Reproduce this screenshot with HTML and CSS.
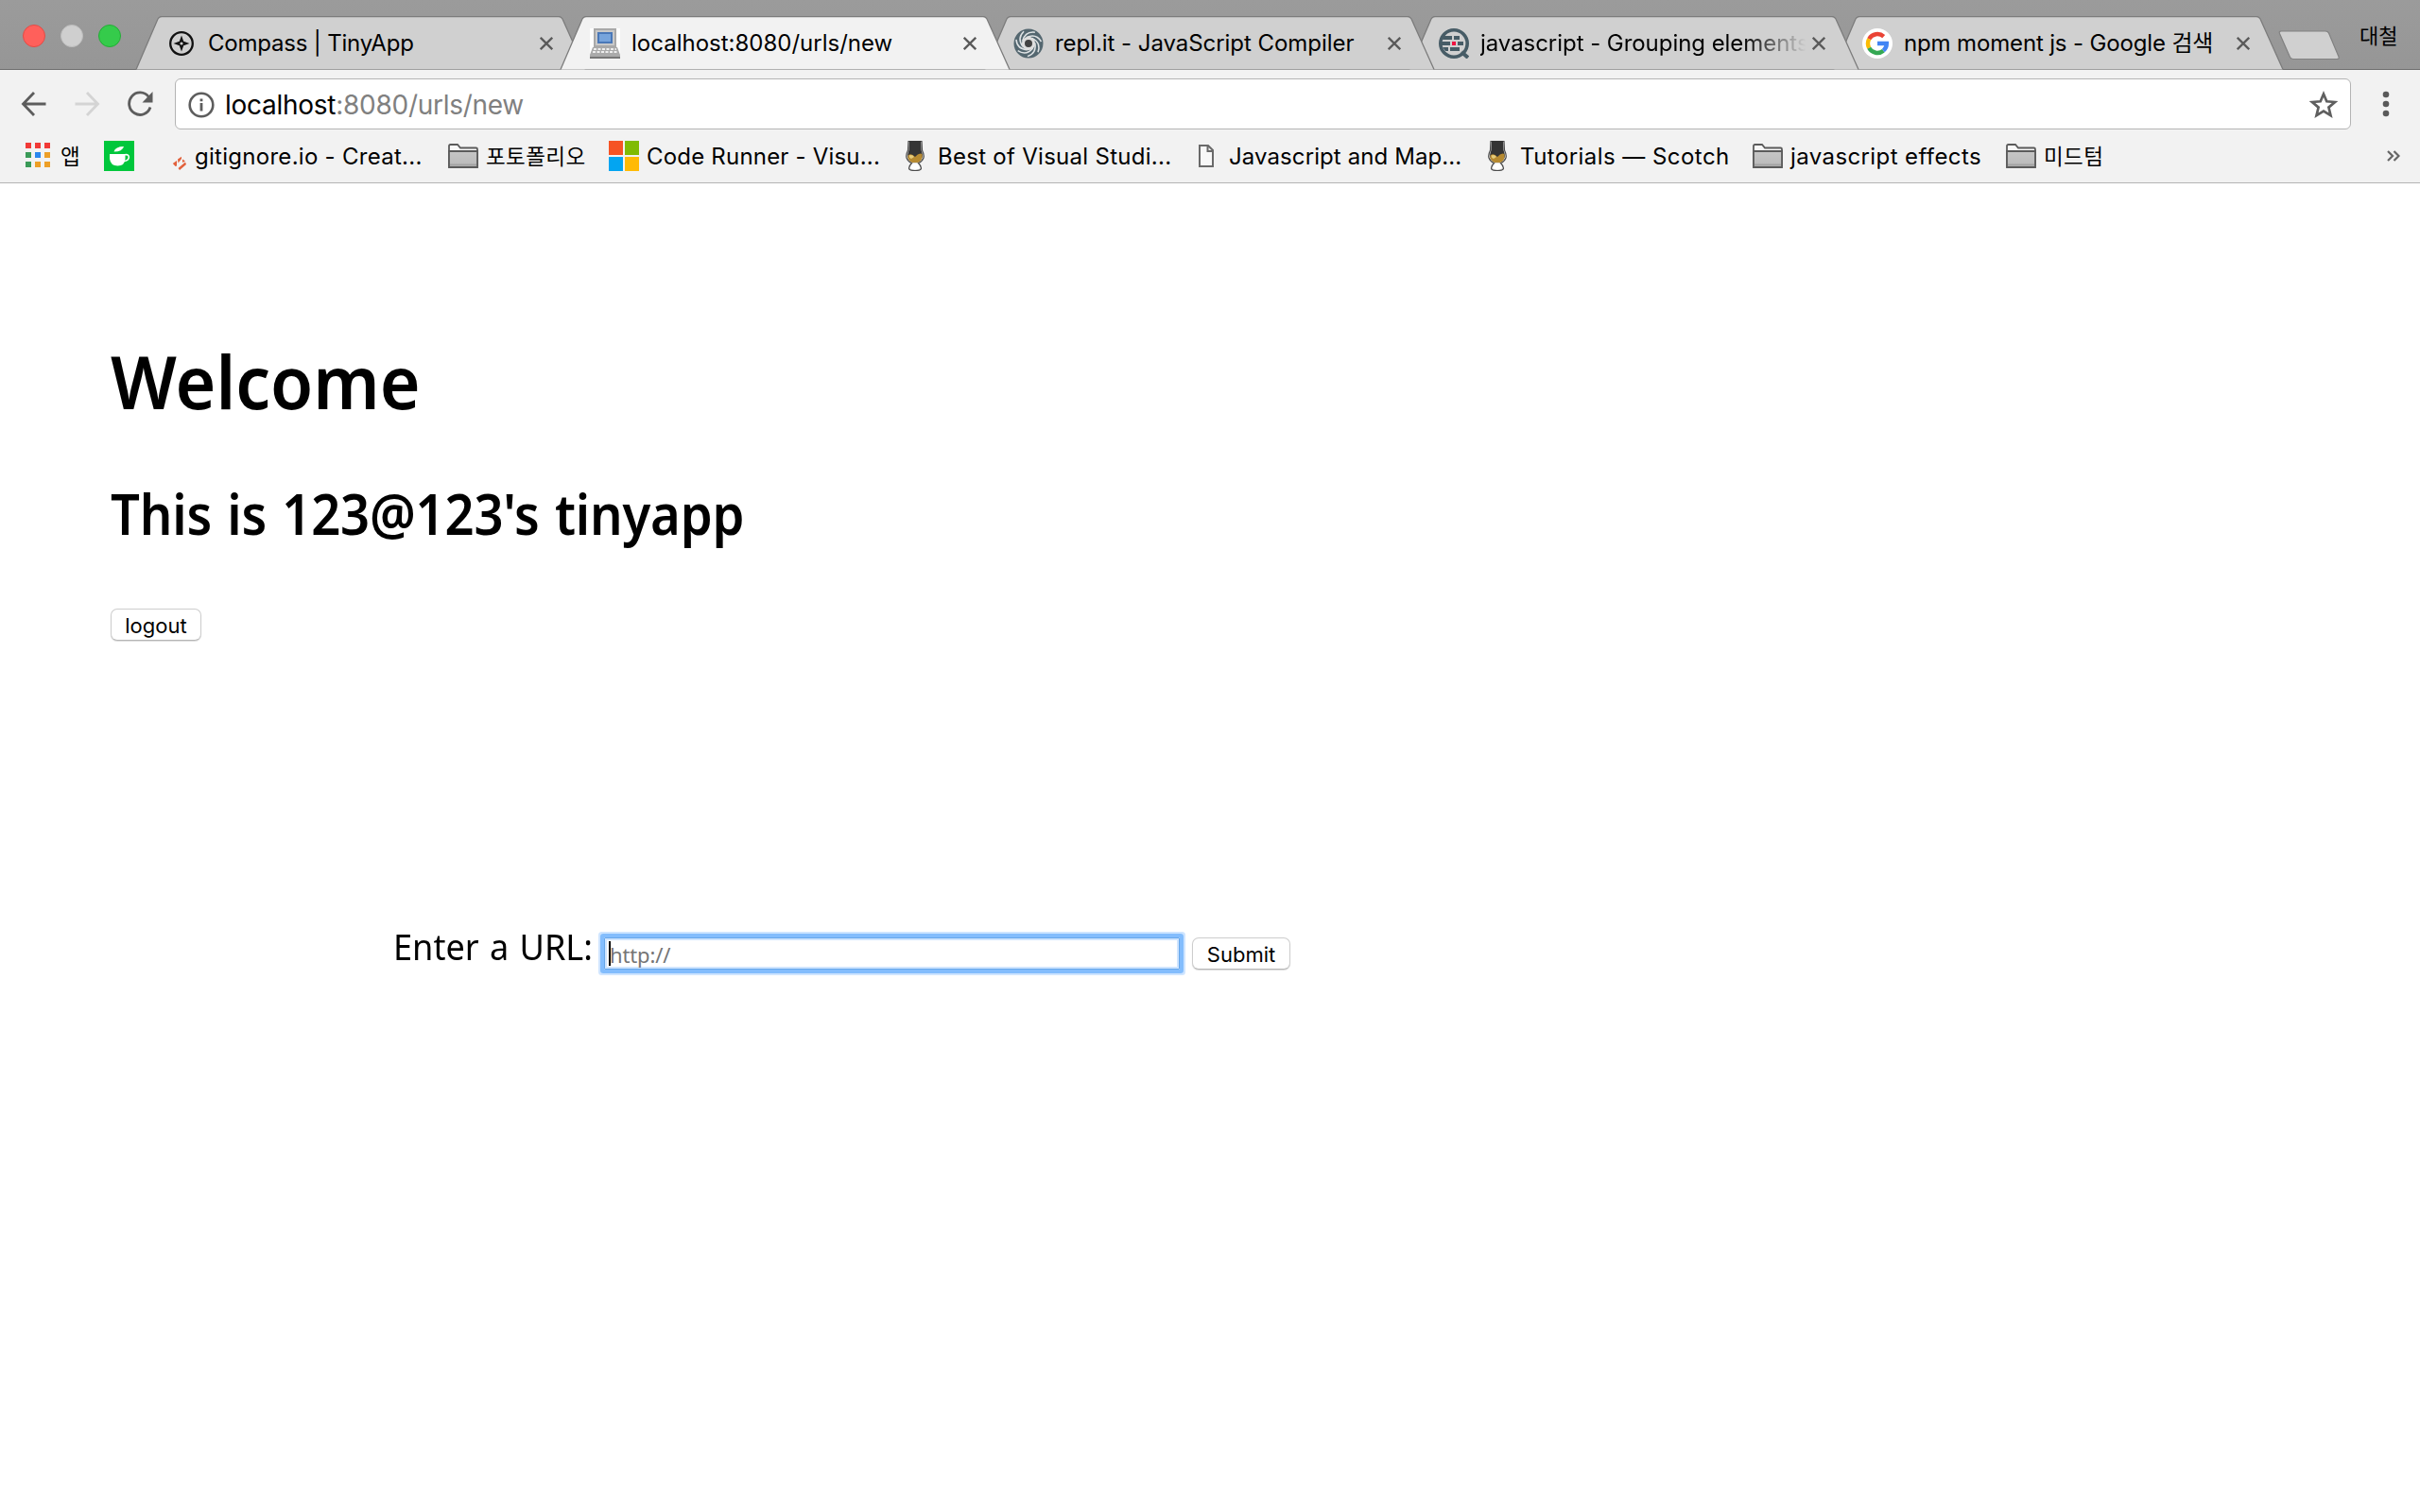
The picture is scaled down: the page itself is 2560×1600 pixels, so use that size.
FILE: index.html
```html
<!DOCTYPE html>
<html lang="ko">
<head>
<meta charset="utf-8">
<title>localhost:8080/urls/new</title>
<link rel="stylesheet" href="styles.css">
</head>
<body>
<svg class="defs" width="0" height="0">
  <defs>
    <linearGradient id="fold" x1="0" y1="0" x2="0" y2="1"><stop offset="0" stop-color="#c6c6c6"/><stop offset="1" stop-color="#b9b9b9"/></linearGradient>
    <symbol id="tabshape" viewBox="0 0 478 57">
      <path d="M1 56.5 L24 3 Q25.500 .5 28 .5 H448 Q450.500 .5 452 3 L476 56.500" stroke-width="1.300"/>
    </symbol>
    <symbol id="close" viewBox="0 0 14 14"><path d="M.8.8 13.200 13.200M13.200.8.8 13.200" stroke="#5a5a5a" stroke-width="2.300" fill="none"/></symbol>
    <symbol id="folder" viewBox="0 0 32 32">
      <path d="M1 27V5.500Q1 4 2.500 4H10l3 3.500H29.500Q31 7.500 31 9V27Q31 28 30 28H2Q1 28 1 27Z" fill="#f8f8f8" stroke="#5b5b5b" stroke-width="1.800"/>
      <path d="M1 11H31V28H1Z" fill="url(#fold)" stroke="#5b5b5b" stroke-width="1.800"/><path d="M2 25.500H30" stroke="#a2a2a2" stroke-width="2"/>
    </symbol>
    <symbol id="glass" viewBox="0 0 32 32">
      <path d="M9 .5H23L23.500 10Q26 15 25 18Q23.500 22 19.500 23.500Q22 26 22.500 29Q22.500 31.500 16 31.500T9.500 29Q10 26 12.500 23.500Q8.500 22 7 18Q6 15 8.500 10Z" fill="#dcdcdc" stroke="#4b4b4b" stroke-width="1.200"/>
      <path d="M10 0H22L22.500 10Q24.500 15 23.500 18H8.500Q7.500 15 9.500 10Z" fill="#343434"/>
      <path d="M8.500 15.500Q12 12.500 16 17Q20 12 23.500 14Q24.500 20.500 19 23H13Q7.500 20.500 8.500 15.500Z" fill="#b68a31"/><path d="M9.500 15.500Q13 14 15 17L12 19Q9.500 18 9.500 15.500Z" fill="#e6cb79"/>
      <path d="M10.500 28.500Q11.500 25.500 13.500 24H18.500Q20.500 25.500 21.500 28.500Q20 30.500 16 30.500T10.500 28.500Z" fill="#fff"/>
    </symbol>
  </defs>
</svg>

<header class="titlebar">
  <div class="lights"><i class="light red"></i><i class="light gray"></i><i class="light green"></i></div>
  <div class="tabs">
    <div class="tab t1"><svg class="shape"><use href="#tabshape"/></svg>
      <svg class="fav" viewBox="0 0 32 32"><circle cx="16" cy="16" r="11.800" fill="none" stroke="#111" stroke-width="2.300"/><path d="M16 7.500 18.200 13.800 24.500 16 18.200 18.200 16 24.500 13.800 18.200 7.500 16 13.800 13.800Z" fill="#111"/><circle cx="16" cy="16" r="1.600" fill="#d0d0d0"/></svg>
      <span class="title">Compass | TinyApp</span><svg class="x"><use href="#close"/></svg></div>
    <div class="tab t2 active"><svg class="shape"><use href="#tabshape"/></svg>
      <svg class="fav" viewBox="0 0 32 32"><path d="M0 0H32V32H0Z" fill="#fff"/><path d="M4 0H28V20H4Z" fill="#a9a9a9"/><path d="M6 2H26V18H6Z" fill="#c9c9c9"/><path d="M8 4H24V16H8Z" fill="#4a78b8"/><path d="M10 6H22V14H10Z" fill="#77a4dc"/><path d="M3 20H29L32 28V32H0V28Z" fill="#aaa"/><path d="M4 22H28M3 25H29" stroke="#eee" stroke-width="1.800" stroke-dasharray="3 1.500"/><path d="M0 31H32" stroke="#777" stroke-width="2"/></svg>
      <span class="title">localhost:8080/urls/new</span><svg class="x"><use href="#close"/></svg></div>
    <div class="tab t3"><svg class="shape"><use href="#tabshape"/></svg>
      <svg class="fav" viewBox="0 0 32 32"><circle cx="16" cy="16" r="15.500" fill="#546770"/><g fill="none" stroke="#dfe3e5" stroke-width="1.500"><path id="arm" d="M14 9.500Q24 5 29.500 14"/><use href="#arm" transform="rotate(51.400 16 16)"/><use href="#arm" transform="rotate(102.900 16 16)"/><use href="#arm" transform="rotate(154.300 16 16)"/><use href="#arm" transform="rotate(205.700 16 16)"/><use href="#arm" transform="rotate(257.100 16 16)"/><use href="#arm" transform="rotate(308.600 16 16)"/></g><circle cx="16" cy="16" r="5.600" fill="#434343" stroke="#dedede" stroke-width="3.200"/></svg>
      <span class="title">repl.it - JavaScript Compiler</span><svg class="x"><use href="#close"/></svg></div>
    <div class="tab t4"><svg class="shape"><use href="#tabshape"/></svg>
      <svg class="fav" viewBox="0 0 32 32"><circle cx="16" cy="16" r="14.200" fill="none" stroke="#475c66" stroke-width="3.600"/><path d="M24 25 31 31" stroke="#475c66" stroke-width="4"/><g fill="#475c66"><path d="M5 8H14V12H4ZM16 8H22V12H16ZM2 14H12V18H2ZM20 14H26V18H20ZM4 20H10V24H7ZM12 20H22V24H12Z"/></g><path d="M14 14H18V18H14Z" fill="#ef1240"/></svg>
      <span class="title faded">javascript - Grouping elements</span><svg class="x"><use href="#close"/></svg></div>
    <div class="tab t5"><svg class="shape"><use href="#tabshape"/></svg>
      <svg class="fav" viewBox="0 0 32 32"><circle cx="16" cy="16" r="16" fill="#fff"/><g fill="none" stroke-width="4.400"><path d="M22.700 8.700A10 10 0 0 0 7.200 11.300" stroke="#ea4335"/><path d="M7.200 11.300A10 10 0 0 0 7.200 20.700" stroke="#fbbc05"/><path d="M7.200 20.700A10 10 0 0 0 22.300 23.700" stroke="#34a853"/><path d="M22.300 23.700A10 10 0 0 0 25.800 16H16" stroke="#4285f4"/></g></svg>
      <span class="title">npm moment js - Google 검색</span><svg class="x"><use href="#close"/></svg></div>
  </div>
  <svg class="newtab" viewBox="0 0 66 32"><path d="M3 1H50Q52.500 1 53.500 3L64 28Q65 30.500 62 30.500H16Q13.500 30.500 12.500 28.500L1.500 3.500Q.5 1 3 1Z" fill="#d0d0d0" stroke="#818181" stroke-width="1.200"/></svg>
  <span class="profile">대철</span>
</header>

<nav class="toolbar">
  <svg class="nav back" viewBox="0 0 28 28"><path d="M26.500 14H3M14 2 2.500 14 14 26" fill="none" stroke="#5d5d5d" stroke-width="2.800"/></svg>
  <svg class="nav forward" viewBox="0 0 28 28"><path d="M1.500 14H25M14 2 25.500 14 14 26" fill="none" stroke="#d4d4d4" stroke-width="2.800"/></svg>
  <svg class="nav reload" viewBox="0 0 28 28"><path d="M23.300 6.500A11.500 11.800 0 1 0 25 17.500" fill="none" stroke="#5d5d5d" stroke-width="2.800"/><path d="M27.500 1V12.500H16.500Z" fill="#5d5d5d"/></svg>
  <div class="omnibox">
    <svg class="info" viewBox="0 0 28 28"><circle cx="14" cy="14" r="12.300" fill="none" stroke="#5d5d5d" stroke-width="2.600"/><path d="M12.600 12H15.400V20.500H12.600ZM12.600 7.500H15.400V10.200H12.600Z" fill="#5d5d5d"/></svg>
    <span class="url">localhost<b>:8080/urls/new</b></span>
    <svg class="star" viewBox="0 0 32 30"><path d="M16 3.500 19.300 11.300 28 12 21.400 17.600 23.500 26.200 16 21.600 8.500 26.200 10.600 17.600 4 12 12.700 11.300Z" fill="none" stroke="#5f5f5f" stroke-width="2.700"/></svg>
  </div>
  <svg class="menu" viewBox="0 0 8 28"><circle cx="4" cy="4" r="3.300"/><circle cx="4" cy="14" r="3.300"/><circle cx="4" cy="24" r="3.300"/></svg>
</nav>

<nav class="bookmarks">
  <div class="bm apps"><svg viewBox="0 0 32 32"><path d="M3 2H9V8H3ZM13 2H19V8H13ZM23 2H29V8H23Z" fill="#f13a37"/><path d="M3 12H9V18H3ZM3 22H9V28H3Z" fill="#3a9a58"/><path d="M13 12H19V18H13Z" fill="#2a87ee"/><path d="M23 12H29V18H23ZM13 22H19V28H13ZM23 22H29V28H23Z" fill="#ed9f27"/></svg><span>앱</span></div>
  <div class="bm green-bm"><svg viewBox="0 0 32 32"><path d="M0 0H32V32H0Z" fill="#00c73c"/><path d="M6 14H22.500V19Q22 26.500 14.500 26.500T6 19Z" fill="#fff"/><path d="M22 14.800Q26.500 14 26.300 17.500T21 21.500" fill="none" stroke="#fff" stroke-width="1.600"/><path d="M10.500 11.500Q12 6 21 6Q19.500 11.500 10.500 11.500Z" fill="#fff"/></svg></div>
  <div class="bm git"><svg viewBox="0 0 32 32"><path d="M17.800 24 22 21V26.500L20.500 27ZM23 19.500 27 16.800V19L23.500 23.500ZM28 19.500 31 21.500 28 23ZM23.500 29 31 22.500 32 25 25 31Z" fill="#e2613c"/></svg><span>gitignore.io - Creat...</span></div>
  <div class="bm port"><svg><use href="#folder"/></svg><span>포토폴리오</span></div>
  <div class="bm code"><svg viewBox="0 0 32 32"><path d="M0 0H15V15H0Z" fill="#f65324"/><path d="M17 0H32V15H17Z" fill="#80bb03"/><path d="M0 17H15V32H0Z" fill="#03a5f1"/><path d="M17 17H32V32H17Z" fill="#ffba05"/></svg><span>Code Runner - Visu...</span></div>
  <div class="bm best"><svg><use href="#glass"/></svg><span>Best of Visual Studi...</span></div>
  <div class="bm map"><svg viewBox="0 0 32 32"><path d="M9 5H18L23 10V27H9ZM17.500 5V11H23" fill="#f8f8f8" stroke="#6a6a6a" stroke-width="2"/></svg><span>Javascript and Map...</span></div>
  <div class="bm scotch"><svg><use href="#glass"/></svg><span>Tutorials — Scotch</span></div>
  <div class="bm effects"><svg><use href="#folder"/></svg><span>javascript effects</span></div>
  <div class="bm mid"><svg><use href="#folder"/></svg><span>미드텀</span></div>
  <svg class="more" viewBox="0 0 14 12"><path d="M1 1 6 6 1 11M7.500 1 12.500 6 7.500 11" fill="none" stroke="#666" stroke-width="2.200"/></svg>
</nav>

<main class="page">
  <h1>Welcome</h1>
  <h2>This is 123@123's tinyapp</h2>
  <button class="btn logout">logout</button>
  <form class="urlform">
    <label>Enter a URL:</label>
    <div class="field"><i class="caret"></i><span>http://</span></div>
    <button class="btn submit" type="button">Submit</button>
  </form>
</main>
</body>
</html>
```
FILE: styles.css
```css
* { box-sizing: border-box; }
body { margin: 0; width: 2560px; height: 1600px; overflow: hidden; background: #fff; color: #000; font-family: Inter, "Noto Sans CJK KR", sans-serif; }
svg { display: block; flex: none; }
.defs { position: absolute; }

.titlebar { display: flex; height: 74px; background: linear-gradient(#9b9b9b, #969696); border-bottom: 1px solid #6e6e6e; }
.lights { display: flex; gap: 16px; width: 143px; padding: 26px 0 0 24px; }
.light { width: 24px; height: 24px; border-radius: 50%; border: 1px solid; }
.red { background: #ff605b; border-color: #e24b45; }
.gray { background: #cfcfcf; border-color: #bdbdbd; }
.green { background: #35cb4b; border-color: #24ac36; }

.tabs { display: flex; height: 74px; padding-top: 17px; }
.tab { position: relative; display: flex; width: 476px; height: 57px; padding: 13px 0 0 32px; margin-right: -27px; flex: none; }
.t1 { z-index: 4; padding-left: 33px; }
.t2 { z-index: 5; }
.t3 { z-index: 3; padding-left: 31px; }
.t4 { z-index: 2; }
.t5 { z-index: 1; padding-left: 31px; }
.shape { position: absolute; left: 0; top: 0; width: 478px; height: 57px; z-index: -1; fill: #d0d0d0; stroke: #7c7c7c; }
.active .shape { fill: #f2f2f2; }
.fav { width: 32px; height: 32px; }
.title { width: 348px; margin: 0 3px 0 12px; font-size: 24px; line-height: 32px; letter-spacing: -.05px; white-space: nowrap; }
.t1 .title { letter-spacing: -.2px; }
.t2 .title { letter-spacing: 0; }
.t3 .title { width: 349px; }
.t5 .title { width: 349px; letter-spacing: -.15px; }
.faded { -webkit-mask-image: linear-gradient(90deg, #000 80%, transparent 99%); mask-image: linear-gradient(90deg, #000 80%, transparent 99%); }
.x { width: 14px; height: 14px; margin-top: 9px; }
.newtab { width: 66px; height: 32px; margin: 32px 0 0 22px; }
.profile { margin: 20px 0 0 20px; font-size: 22px; line-height: 36px; white-space: nowrap; }

.toolbar { display: flex; height: 63px; padding: 9px 0 0 22px; background: #f2f2f2; }
.nav { width: 28px; height: 28px; margin: 13px 28px 0 0; }
.reload { margin-right: 23px; }
.omnibox { display: flex; width: 2302px; height: 54px; background: #fff; border: 1px solid #b4b4b4; border-radius: 6px; padding-left: 13px; }
.info { width: 28px; height: 28px; margin-top: 13px; }
.url { margin-left: 11px; font-size: 28px; line-height: 54px; letter-spacing: -.27px; white-space: nowrap; }
.url b { font-weight: 400; color: #808080; }
.star { width: 32px; height: 30px; margin: 12px 12px 0 auto; }
.menu { width: 8px; height: 28px; margin: 13px 0 0 33px; fill: #5a5a5a; }

.bookmarks { display: flex; height: 57px; padding: 12px 0 0 24px; background: #f2f2f2; border-bottom: 1px solid #b4b4b4; }
.bm { display: flex; gap: 8px; flex: none; }
.bm svg { width: 32px; height: 32px; }
.bm span { font-size: 24px; line-height: 34px; letter-spacing: .28px; white-space: nowrap; }
.apps { width: 86px; }
.green-bm { width: 55px; }
.git { width: 309px; }
.git span { margin-left: 1px; }
.port { width: 170px; }
.code, .best, .map { width: 308px; }
.code span { letter-spacing: .2px; }
.map span { letter-spacing: .1px; }
.scotch { width: 286px; }
.scotch span { letter-spacing: .45px; }
.effects { width: 268px; }
.effects span { letter-spacing: .4px; }
.apps span, .port span, .mid span { font-size: 22.500px; letter-spacing: .4px; line-height: 33px; }
.more { width: 14px; height: 12px; margin: 10px 21px 0 auto; }

.page { display: flex; flex-direction: column; align-items: flex-start; padding: 158px 0 0 117px; font-family: "Noto Sans", sans-serif; }
h1 { margin: 0; font-size: 77px; line-height: 104px; font-weight: 600; white-space: nowrap; transform: scaleX(.953); transform-origin: 0 0; }
h2 { margin: 47px 0 0; font-size: 59px; line-height: 80px; font-weight: 600; letter-spacing: -.2px; word-spacing: 2.500px; white-space: nowrap; transform: scaleX(.921); transform-origin: 0 0; }
.btn { height: 34px; padding: 0; background: #fff; border: 1px solid #cdcdcd; border-bottom-color: #b5b5b5; border-radius: 7px; box-shadow: 0 1px 1px #ddd; font: 22px/32px Inter, sans-serif; color: #000; white-space: nowrap; }
.logout { width: 96px; padding-top: 1px; margin-top: 61px; }
.urlform { display: flex; margin: 303px 0 0 299px; }
label { width: 220px; flex: none; font-size: 38px; line-height: 40px; word-spacing: 2px; white-space: nowrap; transform: scaleX(.95); transform-origin: 0 0; }
.field { display: flex; flex: none; width: 609px; height: 34px; margin: 11px 13px 0 3px; padding: 3px 0 0 4px; border: 1px solid #68a7ea; border-radius: 1px; box-shadow: 0 0 0 4px #83bdfd, 0 0 0 6px #cfe5ff, inset 0 0 0 2px #cfe5ff; font-size: 22px; line-height: 27px; color: #757575; }
.field span { font-size: 22px; margin-left: -1px; letter-spacing: -.15px; line-height: 28px; }
.caret { width: 2px; height: 26px; background: #000; }
.submit { width: 104px; padding-top: 1px; margin-top: 11px; }
```
